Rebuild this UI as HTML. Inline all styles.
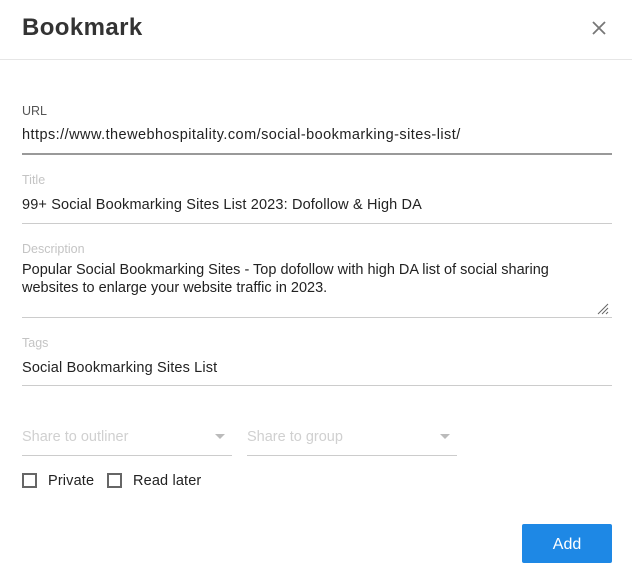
<!DOCTYPE html>
<html><head><meta charset="utf-8"><style>
*{margin:0;padding:0;box-sizing:border-box}
body{width:632px;height:579px;background:#fff;font-family:"Liberation Sans",sans-serif;position:relative;overflow:hidden;color:#222}
.a{position:absolute;white-space:nowrap}
.lbl{font-size:12.5px;color:#555}
.lbl.l{color:#c4c4c4}
.val{font-size:14.5px;color:#222;letter-spacing:0.15px}
.line{position:absolute;left:22px;width:590px;height:1px;background:#ccc}
.cb{position:absolute;width:15px;height:15px;border:2px solid #666;top:473px}
</style></head><body>
<div class="a" style="left:22px;top:14px;font-size:24px;font-weight:bold;color:#333;letter-spacing:0.4px">Bookmark</div>
<svg class="a" style="left:591px;top:20px" width="16" height="16" viewBox="0 0 16 16"><path d="M2 2L14 14M14 2L2 14" stroke="#777" stroke-width="1.8"/></svg>
<div style="position:absolute;left:0;top:59px;width:632px;height:1px;background:#e6e6e6"></div>

<div class="a lbl" style="left:22px;top:104px">URL</div>
<div class="a val" style="left:22px;top:127px;letter-spacing:0.45px">https://www.thewebhospitality.com/social-bookmarking-sites-list/</div>
<div class="line" style="top:153px;height:2px;background:#999"></div>

<div class="a lbl l" style="left:22px;top:173px">Title</div>
<div class="a val" style="left:22px;top:197px">99+ Social Bookmarking Sites List 2023: Dofollow &amp; High DA</div>
<div class="line" style="top:223px"></div>

<div class="a lbl l" style="left:22px;top:242px">Description</div>
<div class="a val" style="left:22px;top:261px;line-height:18px;letter-spacing:0">Popular Social Bookmarking Sites - Top dofollow with high DA list of social sharing<br>websites to enlarge your website traffic in 2023.</div>
<svg class="a" style="left:597px;top:303px" width="12" height="12" viewBox="0 0 12 12"><path d="M11 1L1 11M11 5L5 11M11 9L9 11" stroke="#666" stroke-width="1"/></svg>
<div class="line" style="top:317px"></div>

<div class="a lbl l" style="left:22px;top:336px">Tags</div>
<div class="a val" style="left:22px;top:360px">Social Bookmarking Sites List</div>
<div class="line" style="top:385px"></div>

<div class="a" style="left:22px;top:429px;font-size:14.5px;color:#d0d0d0">Share to outliner</div>
<svg class="a" style="left:215px;top:434px" width="10" height="6"><path d="M0 0H10L5 5Z" fill="#bbb"/></svg>
<div class="line" style="top:455px;width:210px"></div>
<div class="a" style="left:247px;top:429px;font-size:14.5px;color:#d0d0d0">Share to group</div>
<svg class="a" style="left:440px;top:434px" width="10" height="6"><path d="M0 0H10L5 5Z" fill="#bbb"/></svg>
<div class="line" style="top:455px;left:247px;width:210px"></div>

<div class="cb" style="left:22px"></div>
<div class="a val" style="left:48px;top:473px">Private</div>
<div class="cb" style="left:107px"></div>
<div class="a val" style="left:133px;top:473px">Read later</div>

<div style="position:absolute;left:522px;top:524px;width:90px;height:39px;background:#1e88e5;border-radius:2px;color:#fff;font-size:16px;text-align:center;line-height:41px">Add</div>
</body></html>
